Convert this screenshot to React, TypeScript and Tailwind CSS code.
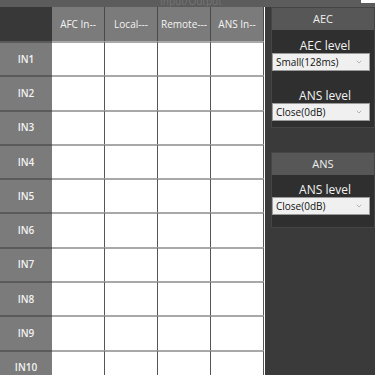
import { ChevronDown } from "lucide-react";

const COLUMNS = ["AFC In--", "Local---", "Remote---", "ANS In--"];
const ROWS = ["IN1", "IN2", "IN3", "IN4", "IN5", "IN6", "IN7", "IN8", "IN9", "IN10"];

function Select({ value }: { value: string }) {
  return (
    <div className="mr-[4px] h-[18px] bg-[#f0f0f0] border border-[#9a9a9a] flex items-center justify-between pl-[3px] pr-[6px]">
      <span className="text-[10px] text-[#111] leading-none">{value}</span>
      <ChevronDown size={8} strokeWidth={1.5} className="text-[#777]" />
    </div>
  );
}

function Group({ title, children, pad }: { title: string; children: React.ReactNode; pad: string }) {
  return (
    <div className="border border-[#454545]">
      <div className="h-[22px] bg-[#575757] flex items-center justify-center text-[11px] text-[#eee]">{title}</div>
      <div className={`bg-[#2f2f2f] ${pad}`}>{children}</div>
    </div>
  );
}

function Field({ label, value, top }: { label: string; value: string; top: string }) {
  return (
    <div className={top}>
      <div className="text-center text-[12px] leading-[15px] text-[#f2f2f2] pl-[4px]">{label}</div>
      <Select value={value} />
    </div>
  );
}

export default function App() {
  return (
    <div className="w-[375px] h-[375px] overflow-hidden bg-[#3a3a3a] flex flex-col" style={{ fontFamily: '"Open Sans", "Noto Sans", sans-serif' }}>
      {/* top strip, cut off */}
      <div className="h-[7px] shrink-0 bg-[#5c5c5c] relative flex">
        <span className="absolute left-[160px] -top-[6px] text-[10px] text-[#747474]">Input/Output</span>
        <div className="absolute right-0 top-0 w-[14px] h-[3px] bg-white" />
      </div>

      <div className="flex flex-1">
        {/* matrix */}
        <div className="w-[265px] shrink-0 flex flex-col bg-white">
          <div className="h-[34px] flex shrink-0">
            <div className="w-[52px] bg-[#383838]" />
            {COLUMNS.map((c) => (
              <div key={c} className="w-[53px] bg-[#7b7b7b] border-r border-[#4a4a4a] flex items-center justify-center text-[10px] text-[#f4f4f4]">
                {c}
              </div>
            ))}
          </div>
          {ROWS.map((r) => (
            <div key={r} className="h-[34.3px] flex shrink-0">
              <div className="w-[52px] bg-[#7b7b7b] border-t-2 border-[#5a5a5a] flex items-center justify-center text-[10px] font-semibold text-[#f2f2f2]">
                {r}
              </div>
              {COLUMNS.map((c) => (
                <div key={c} className="w-[53px] bg-white border-r border-[#555] border-t-2 border-t-[#a8a8a8]" />
              ))}
            </div>
          ))}
        </div>

        {/* side panel */}
        <div className="flex-1 pl-[6px] flex flex-col gap-[24px]">
          <Group title="AEC" pad="pb-[6px]">
            <Field label="AEC level" value="Small(128ms)" top="pt-[8px]" />
            <Field label="ANS level" value="Close(0dB)" top="pt-[17px]" />
          </Group>
          <Group title="ANS" pad="pb-[12px]">
            <Field label="ANS level" value="Close(0dB)" top="pt-[7px]" />
          </Group>
        </div>
      </div>
    </div>
  );
}
